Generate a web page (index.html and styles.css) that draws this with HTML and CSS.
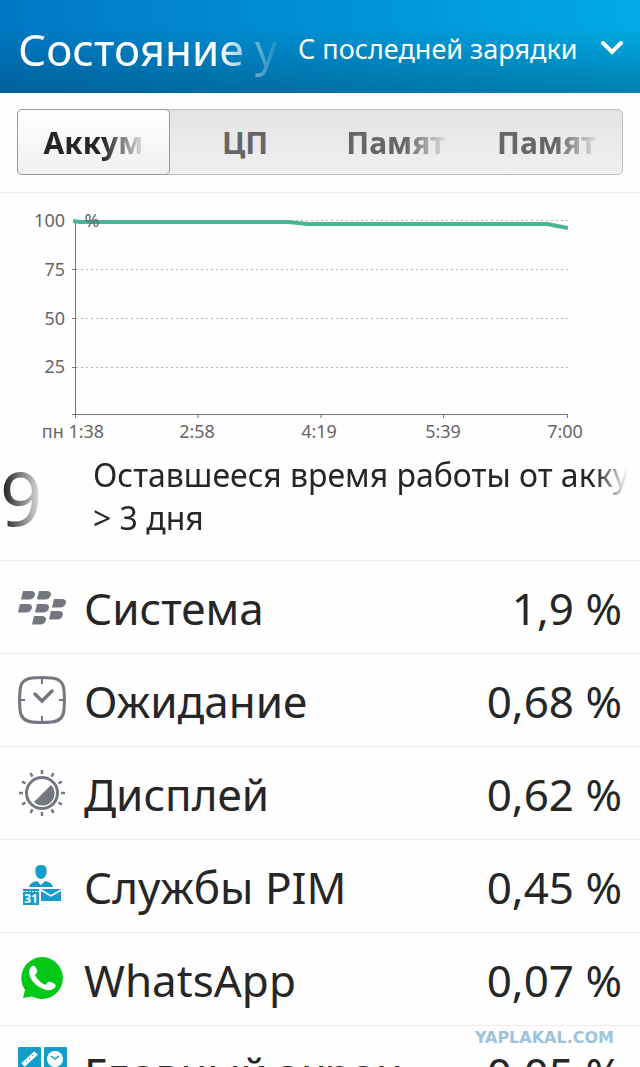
FILE: index.html
```html
<!DOCTYPE html>
<html lang="ru">
<head>
    <meta charset="UTF-8">
    <meta name="viewport" content="width=device-width, initial-scale=1.0">
    <title>Состояние устройства</title>
    <link rel="stylesheet" href="styles.css">
</head>
<body>

    <div class="screen">
        <header class="header">
            <h1 class="title">Состояние у</h1>
            <div class="period">
                <select class="period-select" aria-label="Период">
                    <option>С последней зарядки</option>
                </select>
                <svg class="chevron" viewBox="0 0 24 16" aria-hidden="true">
                    <path d="M3 2L12 11L21 2" fill="none" stroke="#fff" stroke-width="4" stroke-linecap="round"/>
                </svg>
            </div>
        </header>

        <div class="tabs-bar">
            <div class="tabs" role="tablist">
                <button class="tab active" role="tab" aria-selected="true"><span class="fade">Аккум</span></button>
                <button class="tab" role="tab" aria-selected="false"><span>ЦП</span></button>
                <button class="tab" role="tab" aria-selected="false"><span class="fade">Памят</span></button>
                <button class="tab" role="tab" aria-selected="false"><span class="fade">Памят</span></button>
            </div>
        </div>

        <main>
            <svg class="chart" viewBox="0 0 640 256" role="img" aria-label="Заряд аккумулятора">
                <g class="grid">
                    <path d="M76 27.5H568M76 76.5H568M76 125.5H568M76 174.5H568"/>
                </g>
                <path class="axis" d="M75.5 27V225M72 76.5H76M72 125.5H76M72 174.5H76M72 221.5H567.5M198 221V225M321 221V225M443.5 221V225M567.5 221V225"/>
                <polyline class="level" points="73,28 80,29 288,29 308,31 547,31 568,35"/>
                <g class="y-labels">
                    <text x="65" y="34">100</text>
                    <text x="65" y="83">75</text>
                    <text x="65" y="132">50</text>
                    <text x="65" y="180">25</text>
                </g>
                <g class="x-labels">
                    <text x="92" y="34">%</text>
                    <text x="73" y="245">пн 1:38</text>
                    <text x="197" y="245">2:58</text>
                    <text x="319" y="245">4:19</text>
                    <text x="443" y="245">5:39</text>
                    <text x="565" y="245">7:00</text>
                </g>
            </svg>

            <section class="remaining">
                <div class="charge">9</div>
                <div class="remaining-text">
                    <p>Оставшееся время работы от акку</p>
                    <p>&gt; 3 дня</p>
                </div>
            </section>

            <ul class="usage">
                <li class="row">
                    <svg class="icon" viewBox="0 0 48 48" aria-hidden="true">
                        <defs>
                            <path id="berry" d="M2 0H10Q14 0 14 3.5Q13 8.5 8 8.5H0Z"/>
                        </defs>
                        <g fill="#74777f">
                            <use href="#berry" x="3" y="8"/>
                            <use href="#berry" x="19" y="8"/>
                            <use href="#berry" x="0" y="21"/>
                            <use href="#berry" x="17" y="21"/>
                            <use href="#berry" x="34" y="16"/>
                            <use href="#berry" x="31" y="28"/>
                            <use href="#berry" x="14" y="33"/>
                        </g>
                    </svg>
                    <span class="name">Система</span>
                    <span class="value">1,9 %</span>
                </li>
                <li class="row">
                    <svg class="icon" viewBox="0 0 48 48" aria-hidden="true">
                        <g fill="none" stroke="#74777f">
                            <path d="M14 2Q24 1 34 2Q45 3 46 14Q47 24 46 34Q45 45 34 46Q24 47 14 46Q3 45 2 34Q1 24 2 14Q3 3 14 2Z" stroke-width="3"/>
                            <path d="M24 3V8M24 40V46M2 24H7M41 24H46" stroke-width="2"/>
                            <path d="M17 18L24 25L34 15" stroke-width="3.5" stroke-linecap="round"/>
                        </g>
                    </svg>
                    <span class="name">Ожидание</span>
                    <span class="value">0,68 %</span>
                </li>
                <li class="row">
                    <svg class="icon" viewBox="0 0 48 48" aria-hidden="true">
                        <circle cx="24" cy="24" r="15.5" fill="none" stroke="#74777f" stroke-width="3"/>
                        <path d="M33 16A12 12 0 0 1 16 33Z" fill="#74777f"/>
                        <g stroke="#74777f" stroke-width="2.5">
                            <path d="M24 1V5M24 43V47M1 24H5M43 24H47"/>
                            <path d="M24 1V5M24 43V47M1 24H5M43 24H47" transform="rotate(30 24 24)"/>
                            <path d="M24 1V5M24 43V47M1 24H5M43 24H47" transform="rotate(60 24 24)"/>
                        </g>
                    </svg>
                    <span class="name">Дисплей</span>
                    <span class="value">0,62 %</span>
                </li>
                <li class="row">
                    <svg class="icon" viewBox="0 0 48 48" aria-hidden="true">
                        <g fill="#149dcb">
                            <path d="M23 3C28 3 29 6 28.5 10C29 12 27.5 13 27 15Q23 19 19 15C18.5 13 17 12 17.5 10C17 6 18 3 23 3Z"/>
                            <path d="M11 25Q12 20 19 19L23 23L27 19Q34 20 35 25Z"/>
                            <path d="M5 27H21V43H5Z"/>
                            <path d="M23 27H43V39H23Z"/>
                        </g>
                        <path d="M5 29.5H21" stroke="#fff" stroke-width="1" stroke-dasharray="2 1"/>
                        <path d="M23 28L33 34L43 28" fill="none" stroke="#fff" stroke-width="1.5"/>
                        <text class="cal-day" x="13" y="41">31</text>
                    </svg>
                    <span class="name">Службы PIM</span>
                    <span class="value">0,45 %</span>
                </li>
                <li class="row">
                    <svg class="icon" viewBox="0 0 48 48" aria-hidden="true">
                        <path d="M24 2A21 21 0 1 1 14 41.5L5 43L7 35A21 21 0 0 1 24 2Z" fill="#04c818"/>
                        <path d="M14 11Q17 10 19 15Q20 17 17 20Q20 26 27 30L30 27Q32 26 37 29Q39 32 35 34Q31 37 23 33Q12 27 11 18Q11 13 14 11Z" fill="#fff"/>
                    </svg>
                    <span class="name">WhatsApp</span>
                    <span class="value">0,07 %</span>
                </li>
                <li class="row">
                    <svg class="icon" viewBox="0 0 48 48" aria-hidden="true">
                        <g fill="#149dcb">
                            <rect width="23" height="23" y="-1" rx="1"/>
                            <rect width="23" height="23" x="26" y="-1" rx="1"/>
                            <rect width="23" height="22" y="25" rx="1"/>
                            <rect width="23" height="22" x="26" y="25" rx="1"/>
                        </g>
                        <path d="M5 17L18 5" stroke="#fff" stroke-width="5"/>
                        <path d="M8 13L9 14M11 10L12 11M14 7L15 8" stroke="#149dcb" stroke-width="1"/>
                        <circle cx="37" cy="11" r="8" fill="#fff"/>
                        <path d="M33 8L37 11L41 8" fill="none" stroke="#149dcb" stroke-width="1.5"/>
                    </svg>
                    <span class="name">Главный экран</span>
                    <span class="value">0,05 %</span>
                </li>
            </ul>
        </main>

        <div class="watermark">YAPLAKAL.COM</div>
    </div>

</body>
</html>
```
FILE: styles.css
```css
*{
    margin: 0;
    padding: 0;
    box-sizing: border-box;
}

body{
    font-family: "Noto Sans", sans-serif;
    color: #262626;
    background-color: #fefefe;
}

.screen{
    position: relative;
    height: 100vh;
    overflow: hidden;
}

.header{
    display: flex;
    align-items: center;
    justify-content: space-between;
    height: 93px;
    padding: 4px 16px 0 18px;
    color: white;
    background: linear-gradient(to bottom, rgba(0, 50, 80, 0) 30%, rgba(0, 50, 80, 0.35)), linear-gradient(to right, #0078c2, #00aae3);
}

.title{
    flex: 1;
    overflow: hidden;
    white-space: nowrap;
    font-size: 44px;
    font-weight: 400;
    mask-image: linear-gradient(to right, black 200px, transparent 265px);
}

.period{
    display: flex;
    align-items: center;
    gap: 22px;
}

.period-select{
    appearance: none;
    border: none;
    background: none;
    color: white;
    font-family: inherit;
    font-size: 27px;
}

.chevron{
    width: 24px;
    height: 16px;
}

.tabs-bar{
    padding: 16px 17px 17px;
    border-bottom: 1px solid #ececec;
}

.tabs{
    display: flex;
    height: 66px;
    border: 1px solid #bdbdbd;
    border-radius: 5px;
    background: linear-gradient(#e4e4e4, #f0f0f0);
}

.tab{
    flex: 1;
    border: none;
    background: none;
    color: #666;
    font-family: inherit;
    font-size: 30px;
    font-weight: 700;
}

.tab.active{
    margin: -1px 0 -1px -1px;
    border: 1px solid #999;
    border-radius: 5px;
    background: linear-gradient(#fff, #f0f0f0);
    color: #262626;
}

.fade{
    mask-image: linear-gradient(to right, black 60%, transparent 105%);
}

.chart{
    display: block;
    width: 100%;
    font-size: 18px;
    fill: #666;
}

.grid{
    stroke: #b4b4b4;
    stroke-dasharray: 2 3;
}

.axis{
    fill: none;
    stroke: #777;
}

.level{
    fill: none;
    stroke: #48b596;
    stroke-width: 4;
}

.y-labels{
    text-anchor: end;
}

.x-labels{
    text-anchor: middle;
}

.remaining{
    display: flex;
    height: 112px;
    border-bottom: 1px solid #ececec;
}

.charge{
    width: 93px;
    font-size: 74px;
    line-height: 98px;
    mask-image: linear-gradient(to right, black 4px, transparent 46px);
}

.remaining-text{
    flex: 1;
    overflow: hidden;
    margin-right: 12px;
    padding-top: 4px;
    font-size: 32px;
    line-height: 43px;
    white-space: nowrap;
    mask-image: linear-gradient(to right, black 94%, transparent);
}

.usage{
    list-style: none;
}

.row{
    display: flex;
    align-items: center;
    gap: 18px;
    height: 93px;
    padding: 2px 18px 0;
    border-bottom: 1px solid #ececec;
    font-size: 44px;
    white-space: nowrap;
}

.icon{
    width: 48px;
    height: 48px;
    margin-bottom: 2px;
    overflow: visible;
}

.cal-day{
    fill: white;
    font-size: 12px;
    font-weight: 700;
    text-anchor: middle;
}

.value{
    margin-left: auto;
}

.watermark{
    position: absolute;
    right: 26px;
    bottom: 20px;
    color: #9fc3da;
    font-family: "DejaVu Sans", sans-serif;
    font-size: 16px;
    line-height: 18px;
    font-weight: 700;
}
```
